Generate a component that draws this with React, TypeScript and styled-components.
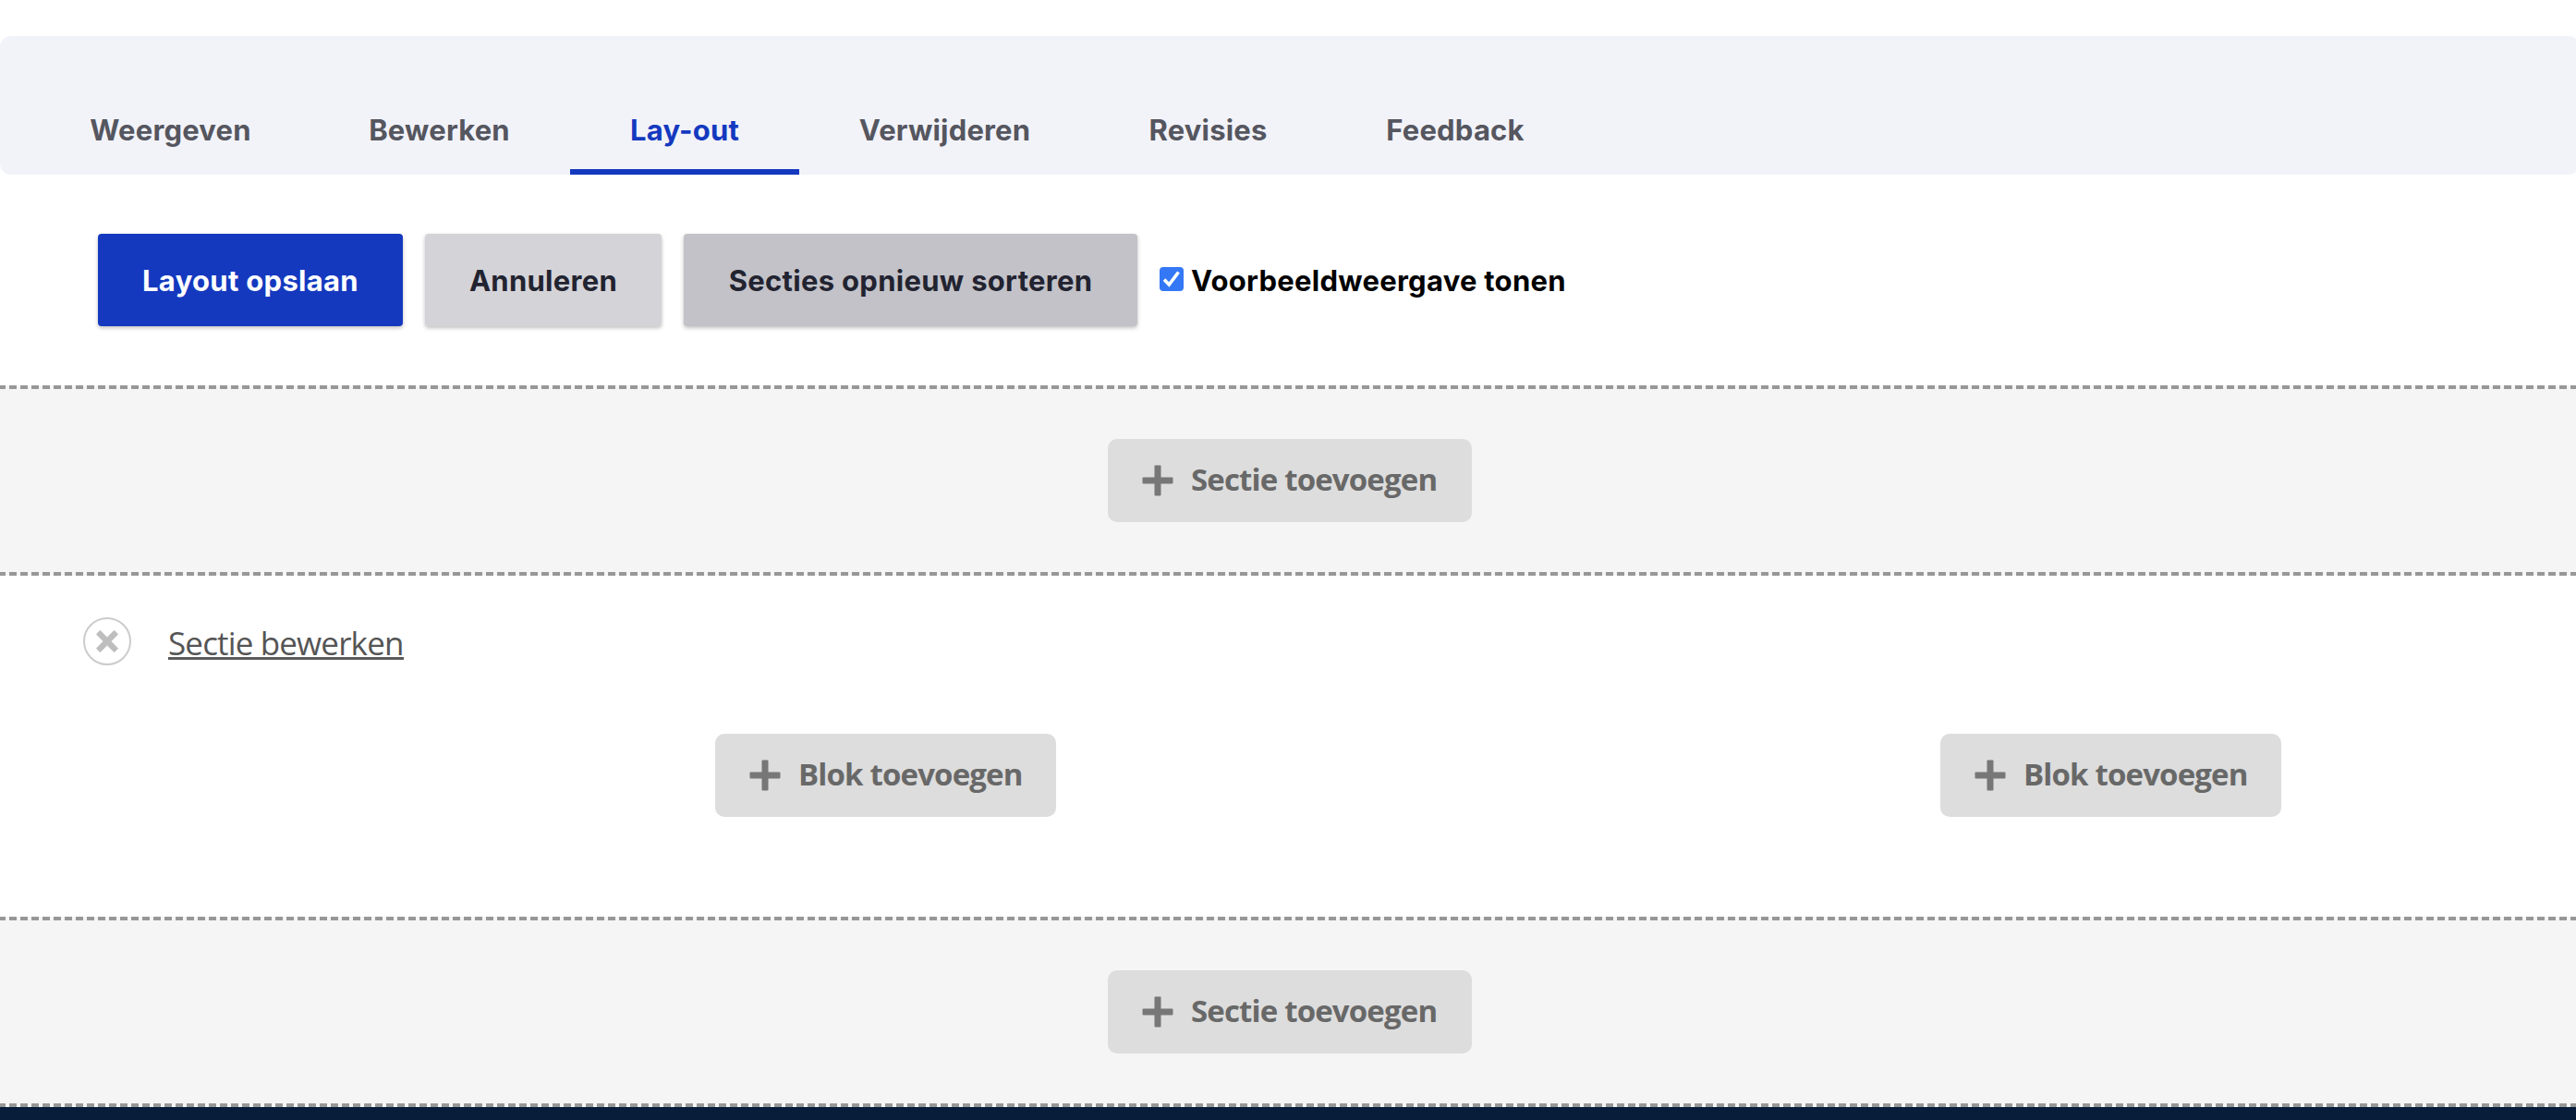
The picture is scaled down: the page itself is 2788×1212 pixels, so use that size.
import React from "react";
import styled, { createGlobalStyle } from "styled-components";

const GlobalStyle = createGlobalStyle`
  * {
    box-sizing: border-box;
  }

  body {
    margin: 0;
    background-color: #fff;
    overflow: hidden;
  }

  button {
    border: none;
    padding: 0;
    white-space: nowrap;
    cursor: pointer;
  }
`;

const SPage = styled.div`
  display: flex;
  flex-direction: column;
  height: 1212px;
  padding-top: 39px;
  overflow: hidden;
  font-family: Inter, "Liberation Sans", sans-serif;
`;

const STabs = styled.nav`
  display: flex;
  align-items: flex-end;
  flex-shrink: 0;
  height: 150px;
  margin-right: -4px;
  padding-left: 35px;
  border-radius: 12px;
  background-color: #f2f3f9;
`;

const STab = styled.a<{ $width: number; $active?: boolean }>`
  display: flex;
  justify-content: center;
  width: ${(props) => props.$width}px;
  height: 96px;
  padding-top: 28px;
  border-bottom: 6px solid
    ${(props) => (props.$active ? "#1439bf" : "transparent")};
  color: ${(props) => (props.$active ? "#1439bf" : "#55565f")};
  font-size: 31px;
  line-height: 40px;
  font-weight: 700;
  letter-spacing: 0.2px;
  white-space: nowrap;
  cursor: pointer;
`;

const SActions = styled.div`
  display: flex;
  align-items: center;
  flex-shrink: 0;
  gap: 24px;
  height: 228px;
  padding: 0 0 0 106px;
`;

const SButton = styled.button<{ $width: number; $bg: string; $color?: string }>`
  width: ${(props) => props.$width}px;
  height: 100px;
  border-radius: 4px;
  background-color: ${(props) => props.$bg};
  box-shadow: 0 2px 4px rgba(0, 0, 0, 0.25);
  color: ${(props) => props.$color || "#222330"};
  font-family: inherit;
  font-size: 31px;
  font-weight: 700;
  letter-spacing: 0.3px;
`;

const SPreview = styled.label`
  display: flex;
  align-items: center;
  gap: 8px;
  padding-top: 1px;
  color: #000;
  font-size: 31px;
  line-height: 40px;
  font-weight: 700;
  letter-spacing: 0.27px;
  white-space: nowrap;
`;

const SCheckbox = styled.span`
  display: flex;
  width: 26px;
  height: 26px;
  margin-bottom: 3px;
  border-radius: 4px;
  background-color: #3478f6;
`;

const SAddSection = styled.section`
  display: flex;
  align-items: center;
  justify-content: center;
  flex-shrink: 0;
  height: 206px;
  margin: 0 -2px;
  padding-left: 4px;
  border-top: 4px dashed #979797;
  border-bottom: 4px dashed #979797;
  background-color: #f5f5f5;
`;

const SAddButton = styled.button<{ $width: number }>`
  display: flex;
  align-items: center;
  gap: 19px;
  width: ${(props) => props.$width}px;
  height: 90px;
  padding: 0 0 0 37px;
  border-radius: 10px;
  background-color: #ddd;
  color: #686868;
  font-family: "Open Sans", "Noto Sans", sans-serif;
  font-size: 33px;
  font-weight: 700;
  letter-spacing: -0.85px;

  svg {
    flex-shrink: 0;
  }

  span {
    padding-bottom: 4px;
  }
`;

const SLayoutSection = styled.section`
  flex-shrink: 0;
  height: 369px;
  padding: 45px 61.5px 0 74.5px;
`;

const SSectionHead = styled.div`
  display: flex;
  align-items: flex-start;
  gap: 41px;
  height: 52px;
  margin-bottom: 74px;
  padding-left: 15.5px;
`;

const SRemove = styled.button`
  display: flex;
  align-items: center;
  justify-content: center;
  width: 52px;
  height: 52px;
  border: 2px solid #ccc;
  border-radius: 50%;
  background-color: #fff;
`;

const SEditLink = styled.a`
  margin-top: 12px;
  margin-left: -1px;
  border-bottom: 3px solid #5b5b5b;
  color: #555;
  font-family: "Open Sans", "Noto Sans", sans-serif;
  font-size: 35px;
  line-height: 31px;
  letter-spacing: -0.85px;
  white-space: nowrap;
  cursor: pointer;
`;

const SRegions = styled.div`
  display: grid;
  grid-template-columns: 2fr 1fr;
  justify-items: center;
`;

const SFooter = styled.footer`
  flex-grow: 1;
  background-color: #071d3a;
`;

const tabs = [
  { label: "Weergeven", width: 299 },
  { label: "Bewerken", width: 283 },
  { label: "Lay-out", width: 248, active: true },
  { label: "Verwijderen", width: 315 },
  { label: "Revisies", width: 255 },
  { label: "Feedback", width: 280 },
];

const PlusIcon: React.FC = () => (
  <svg width='34' height='34' viewBox='0 0 34 34' fill='#777'>
    <rect x='13.5' y='0.5' width='7' height='33' rx='1' />
    <rect x='0.5' y='13.5' width='33' height='7' rx='1' />
  </svg>
);

const CrossIcon: React.FC = () => (
  <svg width='24' height='24' viewBox='0 0 24 24' fill='#bebebe'>
    <g transform='rotate(45 12 12)'>
      <rect x='8.8' y='-2' width='6.4' height='28' rx='1' />
      <rect x='-2' y='8.8' width='28' height='6.4' rx='1' />
    </g>
  </svg>
);

const AddSection: React.FC = () => (
  <SAddSection>
    <SAddButton type='button' $width={394}>
      <PlusIcon />
      <span>Sectie toevoegen</span>
    </SAddButton>
  </SAddSection>
);

const AddBlock: React.FC = () => (
  <SAddButton type='button' $width={369}>
    <PlusIcon />
    <span>Blok toevoegen</span>
  </SAddButton>
);

const App: React.FC = () => {
  return (
    <SPage>
      <GlobalStyle />
      <STabs>
        {tabs.map((tab) => (
          <STab key={tab.label} $width={tab.width} $active={tab.active}>
            {tab.label}
          </STab>
        ))}
      </STabs>

      <SActions>
        <SButton type='button' $width={330} $bg='#1439bf' $color='#fff'>
          Layout opslaan
        </SButton>
        <SButton type='button' $width={256} $bg='#d4d3d8'>
          Annuleren
        </SButton>
        <SButton type='button' $width={491} $bg='#c2c2c8'>
          Secties opnieuw sorteren
        </SButton>
        <SPreview>
          <SCheckbox>
            <svg width='26' height='26' viewBox='0 0 26 26' fill='none'>
              <path d='M5 13.5 L10.3 19 L20.5 5.5' stroke='#fff' strokeWidth='3.6' />
            </svg>
          </SCheckbox>
          Voorbeeldweergave tonen
        </SPreview>
      </SActions>

      <AddSection />

      <SLayoutSection>
        <SSectionHead>
          <SRemove type='button' aria-label='Sectie verwijderen'>
            <CrossIcon />
          </SRemove>
          <SEditLink>Sectie bewerken</SEditLink>
        </SSectionHead>
        <SRegions>
          <AddBlock />
          <AddBlock />
        </SRegions>
      </SLayoutSection>

      <AddSection />
      <SFooter />
    </SPage>
  );
};

export default App;
